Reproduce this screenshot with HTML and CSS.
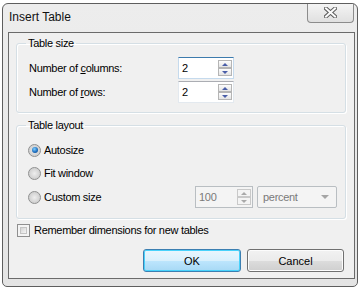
FILE: index.html
```html
<!DOCTYPE html>
<html lang="en">
<head>
  <meta charset="UTF-8">
  <title>Insert Table</title>
  <link rel="stylesheet" href="styles.css">
</head>
<body>

  <!-- Dialog window -->
  <div class="window">
    <div class="titlebar">
      <span class="title">Insert Table</span>
      <div class="close-btn">
        <svg width="13" height="11" viewBox="0 0 13 11">
          <path d="M2 1.5 L11 9.5 M11 1.5 L2 9.5" stroke="#5d5d5d" stroke-width="4" stroke-linecap="square" fill="none"/>
          <path d="M2 1.5 L11 9.5 M11 1.5 L2 9.5" stroke="#fbfbfb" stroke-width="2" stroke-linecap="square" fill="none"/>
        </svg>
      </div>
    </div>

    <div class="client">
      <!-- Table size -->
      <fieldset class="group">
        <legend>Table size</legend>
        <div class="group-body size-body">
          <div class="row">
            <label class="row-label">Number of <u>c</u>olumns:</label>
            <div class="spin focused">
              <span class="spin-value">2</span>
              <div class="spin-btns">
                <span class="spin-btn up"></span>
                <span class="spin-btn down"></span>
              </div>
            </div>
          </div>
          <div class="row">
            <label class="row-label">Number of <u>r</u>ows:</label>
            <div class="spin">
              <span class="spin-value">2</span>
              <div class="spin-btns">
                <span class="spin-btn up"></span>
                <span class="spin-btn down"></span>
              </div>
            </div>
          </div>
        </div>
      </fieldset>

      <!-- Table layout -->
      <fieldset class="group layout-group">
        <legend>Table layout</legend>
        <div class="group-body layout-body">
          <div class="option">
            <span class="radio on"></span>
            <span>Autosize</span>
          </div>
          <div class="option">
            <span class="radio"></span>
            <span>Fit window</span>
          </div>
          <div class="option">
            <span class="radio"></span>
            <span>Custom size</span>
            <div class="custom-size">
              <div class="spin disabled wide">
                <span class="spin-value">100</span>
                <div class="spin-btns">
                  <span class="spin-btn up"></span>
                  <span class="spin-btn down"></span>
                </div>
              </div>
              <div class="combo">
                <span>percent</span>
              </div>
            </div>
          </div>
        </div>
      </fieldset>

      <div class="check-row">
        <span class="check"></span>
        <span>Remember dimensions for new tables</span>
      </div>

      <div class="buttons">
        <button class="btn default">OK</button>
        <button class="btn cancel">Cancel</button>
      </div>
    </div>
  </div>

</body>
</html>
```

FILE: styles.css
```css
* {
  box-sizing: border-box;
}

body {
  margin: 0;
  background-color: #fff;
  font-family: "Liberation Sans", Arial, sans-serif;
  font-size: 11px;
  color: #000;
}

.window {
  width: 356px;
  height: 284px;
  margin: 3px 0 0 2px;
  padding: 0 2px 7px 5px;
  border: 1px solid #5e5e5e;
  border-radius: 6px 6px 5px 5px;
  background: linear-gradient(#ededed, #e4e4e4);
  display: flex;
  flex-direction: column;
}

.titlebar {
  height: 28px;
  display: flex;
  justify-content: space-between;
  align-items: flex-start;
}

.title {
  font-size: 12px;
  line-height: 15px;
  padding: 6px 0 0 1px;
  color: #111;
}

.close-btn {
  width: 47px;
  height: 19px;
  margin-right: 1px;
  border: 1px solid #8c8c8c;
  border-top: none;
  border-radius: 0 0 4px 4px;
  background: linear-gradient(#f4f4f4, #e0e0e0);
  display: flex;
  align-items: center;
  justify-content: center;
  padding-bottom: 1px;
}

.client {
  height: 247px;
  border: 1px solid #6b6b6b;
  background-color: #f0f0f0;
  padding: 3px 8px 6px 7px;
  letter-spacing: -0.3px;
  display: flex;
  flex-direction: column;
}

.group {
  margin: 0;
  padding: 0;
  min-width: 0;
  border: 1px solid #d5dfe5;
  border-radius: 3px;
  box-shadow: inset 1px 1px 0 #fff, 1px 1px 0 #fff;
}

.group legend {
  margin-left: 9px;
  padding: 0 2px;
  line-height: 14px;
}

.layout-group {
  margin-top: 5px;
}

.size-body {
  padding: 7px 0 9px 12px;
}

.layout-body {
  padding: 7px 8px 9px 11px;
}

.row {
  height: 22px;
  display: flex;
  align-items: center;
}

.row + .row {
  margin-top: 2px;
}

.row-label {
  width: 149px;
}

/* spinner */
.spin {
  width: 56px;
  height: 22px;
  border: 1px solid #e3e9ef;
  border-top-color: #abadb3;
  background-color: #fff;
  padding: 2px 1px 2px 3px;
  display: flex;
  align-items: center;
}

.spin.focused {
  border-color: #c5daed;
  border-top-color: #3d7bad;
}

.spin.wide {
  width: 58px;
}

.spin-value {
  flex: 1;
}

.spin-btns {
  display: flex;
  flex-direction: column;
  align-self: stretch;
}

.spin-btn {
  width: 14px;
  height: 8px;
  border: 1px solid #b5b5b5;
  background: linear-gradient(#fdfdfd, #e4e4e4);
  display: flex;
  align-items: center;
  justify-content: center;
}

.spin-btn.up::after {
  content: "";
  border-left: 3px solid transparent;
  border-right: 3px solid transparent;
  border-bottom: 3px solid #4a5ea8;
}

.spin-btn.down::after {
  content: "";
  border-left: 3px solid transparent;
  border-right: 3px solid transparent;
  border-top: 3px solid #4a5ea8;
}

.spin.disabled {
  border-color: #b9bec2;
  background-color: #f4f4f4;
  color: #7a7a7a;
}

.spin.disabled .spin-btn {
  border-color: #c9c9c9;
  background: #f4f4f4;
}

.spin.disabled .spin-btn.up::after {
  border-bottom-color: #a9a9a9;
}

.spin.disabled .spin-btn.down::after {
  border-top-color: #a9a9a9;
}

/* radio options */
.option {
  height: 22px;
  display: flex;
  align-items: center;
  gap: 3px;
}

.option + .option {
  margin-top: 1px;
}

.option:last-child {
  height: 24px;
}

.radio {
  width: 13px;
  height: 13px;
  flex: none;
  border-radius: 50%;
  border: 1px solid #8e8f8f;
  background: radial-gradient(circle at 50% 50%, #eeeeee 0, #d2d2d2 65%, #f7f7f7 100%);
  display: flex;
  align-items: center;
  justify-content: center;
}

.radio.on::after {
  content: "";
  width: 6px;
  height: 6px;
  border-radius: 50%;
  background: radial-gradient(circle at 40% 35%, #7fd0ff 0, #1f70c1 55%, #0d3f7c 100%);
}

.custom-size {
  margin-left: auto;
  display: flex;
  gap: 4px;
}

.combo {
  width: 80px;
  height: 22px;
  border: 1px solid #b9bec2;
  border-radius: 2px;
  background-color: #f4f4f4;
  color: #7a7a7a;
  padding: 0 7px 0 5px;
  display: flex;
  align-items: center;
  justify-content: space-between;
}

.combo::after {
  content: "";
  border-left: 4px solid transparent;
  border-right: 4px solid transparent;
  border-top: 4px solid #a5a5a5;
}

/* checkbox */
.check-row {
  margin: 2px 0 0 1px;
  height: 18px;
  display: flex;
  align-items: center;
  gap: 4px;
}

.check {
  width: 13px;
  height: 13px;
  border: 1px solid #8f8f8f;
  background-color: #f4f4f4;
  padding: 2px;
  display: flex;
}

.check::after {
  content: "";
  flex: 1;
  background: linear-gradient(135deg, #d4d4d4, #f5f5f5);
  border: 1px solid #c4c4c4;
}

/* buttons */
.buttons {
  margin-top: auto;
  margin-right: 2px;
  display: flex;
  justify-content: flex-end;
  gap: 6px;
}

.btn {
  height: 23px;
  padding: 0;
  font-family: inherit;
  font-size: 11px;
  color: #000;
  border-radius: 3px;
}

.btn.default {
  width: 98px;
  border: 1px solid #3c7fb1;
  box-shadow: inset 0 0 0 1px #48d2fb;
  background: linear-gradient(#eaf6fd 0, #d9f0fc 50%, #bee6fd 50%, #a7d9f5 100%);
}

.btn.cancel {
  width: 97px;
  border: 1px solid #707070;
  box-shadow: inset 0 0 0 1px #fcfcfc;
  background: linear-gradient(#f2f2f2 0, #ebebeb 50%, #dddddd 50%, #cfcfcf 100%);
}
```
